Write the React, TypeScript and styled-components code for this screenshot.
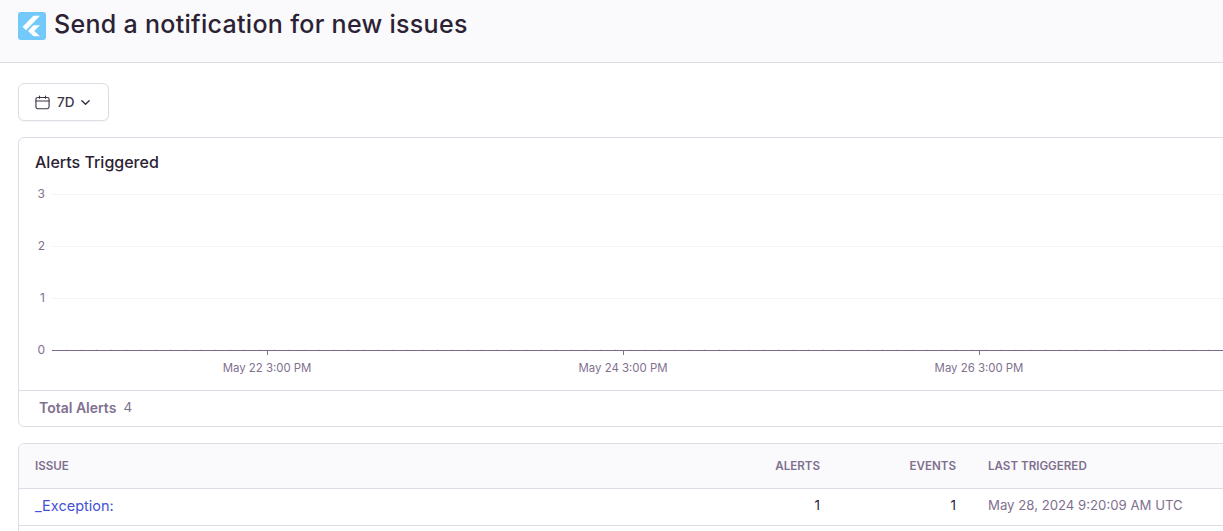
import React from 'react';
import styled, { createGlobalStyle } from 'styled-components';

const Global = createGlobalStyle`
  html, body { margin: 0; padding: 0; background: #fff; }
  body { font-family: Inter, "Open Sans", "Liberation Sans", sans-serif; color: #2b2233; overflow: hidden; }
`;
const Page = styled.div`width: 1223px; height: 531px; overflow: hidden;`;
const Header = styled.header`
  height: 63px; box-sizing: border-box; background: #faf9fb; border-bottom: 1px solid #e0dce5;
  display: flex; align-items: flex-start; gap: 8px; padding: 12px 18px 0;
`;
const Title = styled.h1`margin: 0; font-size: 25px; line-height: 25px; font-weight: 550; letter-spacing: 0.3px; color: #2b2233;`;
const Body = styled.main`width: 1300px; padding: 20px 18px 0; display: flex; flex-direction: column; align-items: flex-start; box-sizing: border-box;`;
const DateButton = styled.button`
  width: 91px; height: 38px; box-sizing: border-box; border: 1px solid #e0dce5; border-radius: 6px; background: #fff;
  display: flex; align-items: center; gap: 6px; padding: 0 0 0 16px; font: 500 13.5px Inter, sans-serif; color: #3e3446;
  box-shadow: 0 1px 2px rgba(43,34,51,.04);
`;
const DateLabel = styled.span`margin-left: 1px;`;
const Card = styled.section`
  width: 100%; box-sizing: border-box; border: 1px solid #e0dce5; border-radius: 6px; background: #fff; overflow: hidden;
  margin-top: 16px;
`;
const ChartHead = styled.div`padding: 14px 16px 0; height: 40px; box-sizing: border-box;`;
const ChartTitle = styled.h2`margin: 0; font-size: 16px; line-height: 20px; font-weight: 500; color: #2b2233;`;
const ChartSvg = styled.svg`display: block;`;
const Footer = styled.div`
  height: 36px; box-sizing: border-box; border-top: 1px solid #e0dce5; display: flex; align-items: center; gap: 7px; padding: 0 0 3px 20px;
  font-size: 13.5px; color: #80708f;
`;
const FooterLabel = styled.span`font-size: 14px; font-weight: 600;`;
const Row = styled.div`
  display: grid; grid-template-columns: 665px 120px 136px 1fr; align-items: center; padding: 0 0 ${p => p.$head ? 0 : 4}px 16px; box-sizing: border-box;
  height: ${p => p.$head ? 45 : 37}px; background: ${p => p.$head ? '#faf9fb' : '#fff'}; border-bottom: 1px solid #e0dce5;
`;
const HeadCell = styled.div`
  font-size: 11.6px; font-weight: 600; text-transform: uppercase; color: #80708f;
  text-align: ${p => p.$right ? 'right' : 'left'}; padding-left: ${p => p.$pad ? 32 : 0}px;
`;
const IssueLink = styled.a`font-size: 14.5px; color: #4452d6; text-decoration: none;`;
const NumCell = styled.div`font-size: 13.5px; color: #2b2233; text-align: right;`;
const DateCell = styled.div`font-size: 13.2px; color: #80708f; padding-left: 32px;`;

const gridY = [{y: 16, l: '3'}, {y: 68, l: '2'}, {y: 120, l: '1'}, {y: 172, l: '0'}];
const xTicks = [{x: 248, l: 'May 22 3:00 PM'}, {x: 604, l: 'May 24 3:00 PM'}, {x: 960, l: 'May 26 3:00 PM'}];
const minor = Array.from({length: 84}, (_, i) => 33 + i * 14.83);

const Chart = () => (
  <ChartSvg width="1264" height="212" viewBox="0 0 1264 212">
    {gridY.map(g => (
      <g key={g.l}>
        <line x1="33" x2="1264" y1={g.y + .5} y2={g.y + .5} stroke={g.l === '0' ? '#7a6a90' : '#f5f3f7'} />
        <text x="26" y={g.y + 4} textAnchor="end" fontSize="12" fill="#80708f" fontFamily="Inter, sans-serif">{g.l}</text>
      </g>
    ))}
    {minor.map(x => <line key={x} x1={x} x2={x} y1="171" y2="172" stroke="#e0dce5" />)}
    {xTicks.map(t => (
      <g key={t.x}>
        <line x1={t.x + .5} x2={t.x + .5} y1="172" y2="177" stroke="#80708f" />
        <text x={t.x} y="194" textAnchor="middle" fontSize="11.4" fill="#80708f" fontFamily="Inter, sans-serif">{t.l}</text>
      </g>
    ))}
  </ChartSvg>
);

export default function App() {
  return (
    <Page>
      <Global />
      <Header>
        <svg width="28" height="28" viewBox="0 0 28 28">
          <rect width="28" height="28" rx="3" fill="#74c9fb" />
          <path d="M15.5 3.8 H22 L8 18.2 L4.6 14.8 Z" fill="#fff" />
          <path d="M15.5 13.2 H22 L16.2 19 L22 24.2 H15.5 L10 19 Z" fill="#fff" />
        </svg>
        <Title>Send a notification for new issues</Title>
      </Header>
      <Body>
        <DateButton>
          <svg width="15" height="15" viewBox="0 0 16 16" fill="none" stroke="#3e3446" strokeWidth="1.2" strokeLinecap="round">
            <rect x="1" y="2.6" width="14" height="12" rx="2" />
            <path d="M1 6.4 H15 M4.8 1 V3.4 M11.2 1 V3.4" />
          </svg>
          <DateLabel>7D</DateLabel>
          <svg width="11" height="11" viewBox="0 0 12 12" fill="none" stroke="#3e3446" strokeWidth="1.6" strokeLinecap="round" strokeLinejoin="round">
            <path d="M2 4 L6 8 L10 4" />
          </svg>
        </DateButton>
        <Card>
          <ChartHead><ChartTitle>Alerts Triggered</ChartTitle></ChartHead>
          <Chart />
          <Footer><FooterLabel>Total Alerts</FooterLabel><span>4</span></Footer>
        </Card>
        <Card>
          <Row $head>
            <HeadCell>Issue</HeadCell>
            <HeadCell $right>Alerts</HeadCell>
            <HeadCell $right>Events</HeadCell>
            <HeadCell $pad>Last Triggered</HeadCell>
          </Row>
          <Row>
            <IssueLink>_Exception:</IssueLink>
            <NumCell>1</NumCell>
            <NumCell>1</NumCell>
            <DateCell>May 28, 2024 9:20:09 AM UTC</DateCell>
          </Row>
          <Row />
        </Card>
      </Body>
    </Page>
  );
}
